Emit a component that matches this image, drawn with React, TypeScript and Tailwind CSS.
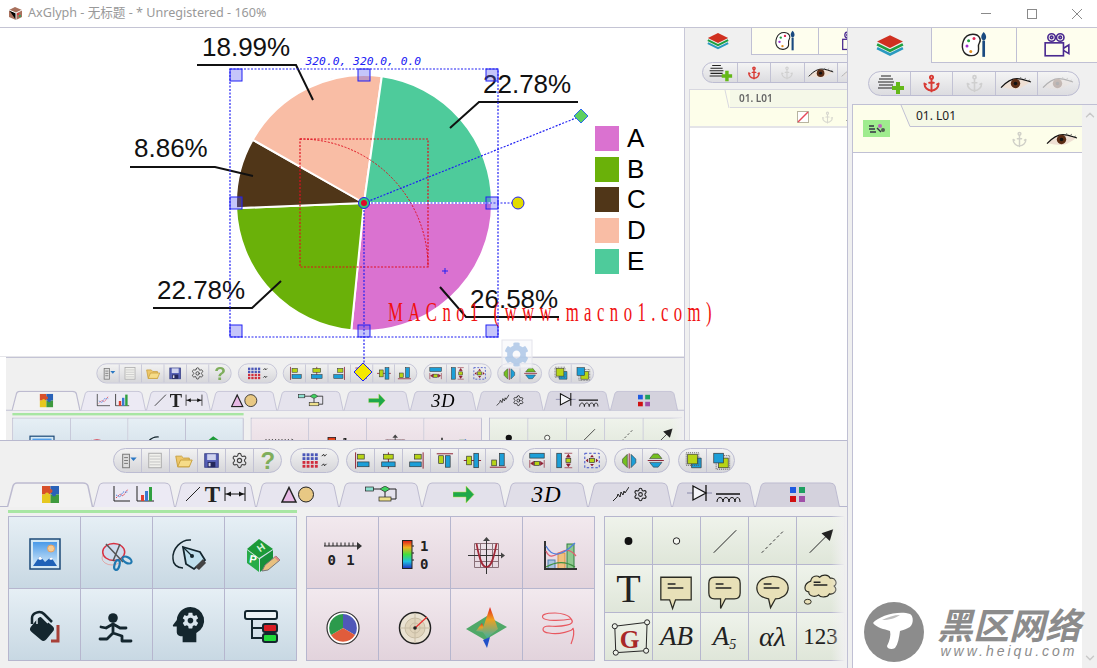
import { Anchor, ChevronDown, ChevronUp, Settings } from "lucide-react";
import { FaCog } from "react-icons/fa";
import { MdPsychology } from "react-icons/md";
import type { ReactNode } from "react";

const RED = "#8c1c2e";
const YEL = "#b7d416";
const BLU = "#1c9fd8";
const INK = "#14262e";
const SANS = "Liberation Sans, sans-serif";
const SERIF = "Liberation Serif, serif";

function polar(r: number, deg: number, cx = 364, cy = 203) {
  const a = (deg * Math.PI) / 180;
  return `${cx + r * Math.cos(a)} ${cy + r * Math.sin(a)}`;
}

function slice(from: number, to: number) {
  return `M364 203 L${polar(128, from)} A128 128 0 0 1 ${polar(128, to)} Z`;
}

const slices = [
  { from: 0, to: 95.7, color: "#da72d0" },
  { from: 95.7, to: 177.7, color: "#6ab109" },
  { from: 177.7, to: 209.6, color: "#503618" },
  { from: 209.6, to: 278, color: "#f9bda5" },
  { from: 278, to: 360, color: "#4ecb9b" },
];

const legend = [
  { name: "A", color: "#da72d0", y: 126 },
  { name: "B", color: "#6ab109", y: 157 },
  { name: "C", color: "#503618", y: 187 },
  { name: "D", color: "#f9bda5", y: 218 },
  { name: "E", color: "#4ecb9b", y: 249 },
];

const labels = [
  { text: "18.99%", x: 202, y: 56, line: "197,65 296,65 313,100" },
  { text: "22.78%", x: 483, y: 93, line: "578,102 479,102 450,128" },
  { text: "8.86%", x: 134, y: 157, line: "130,167 215,167 253,176" },
  { text: "22.78%", x: 157, y: 299, line: "153,308 252,308 281,281" },
  { text: "26.58%", x: 470, y: 308, line: "440,287 466,317 559,317" },
];

const handles = [
  [236, 75], [364, 75], [492, 75], [236, 203], [492, 203], [236, 331], [364, 331], [492, 331],
];

function Chart() {
  return (
    <svg width="730" height="413" viewBox="0 28 730 413" className="absolute left-0 top-0">
      {slices.map((s) => (
        <path key={s.from} d={slice(s.from, s.to)} fill={s.color} stroke="#fff" strokeWidth="2" />
      ))}
      {legend.map((l) => (
        <g key={l.name}>
          <rect x="595" y={l.y} width="24" height="25" fill={l.color} />
          <text x="627" y={l.y + 21} fontSize="26" fontFamily={SANS} fill="#000">{l.name}</text>
        </g>
      ))}
      {labels.map((l) => (
        <g key={l.text + l.x}>
          <polyline points={l.line} fill="none" stroke="#111" strokeWidth="2" />
          <text x={l.x} y={l.y} fontSize="26" fontFamily={SANS} fill="#111">{l.text}</text>
        </g>
      ))}
      <rect x="300" y="139" width="128" height="128" fill="none" stroke="#e01020" strokeWidth="1.2" strokeDasharray="2 1.5" />
      <path d="M300 139 A128 128 0 0 1 428 267" fill="none" stroke="#e01020" strokeDasharray="2 1.5" />
      <rect x="230" y="69" width="268" height="268" fill="none" stroke="#2020f4" strokeWidth="1.2" strokeDasharray="2 1.5" />
      <path d="M364 203H518M364 203V372M364 203L581 116" stroke="#2020f4" strokeWidth="1.2" strokeDasharray="2 1.5" fill="none" />
      {handles.map(([x, y]) => (
        <rect key={`${x}-${y}`} x={x - 6} y={y - 6} width="12" height="12" fill="#5a5af0" fillOpacity="0.35" stroke="#2020f4" />
      ))}
      <circle cx="518" cy="203" r="6" fill="#e2dc00" stroke="#2020f4" />
      <path d="M581 109L588 116L581 123L574 116Z" fill="#5fd060" stroke="#2a6af0" />
      <circle cx="364" cy="203" r="5.5" fill="#30c878" stroke="#2020f4" />
      <circle cx="364" cy="203" r="3" fill="#e00828" />
      <text x="305.5" y="65" fontSize="11.3" fontStyle="italic" fontFamily="DejaVu Sans Mono, monospace" fill="#2020f4">320.0, 320.0, 0.0</text>
      <path d="M445 268V274M442 271H448" stroke="#2020f4" />
      <rect x="502" y="340" width="30" height="28" fill="#f6f6fa" fillOpacity="0.55" stroke="#e4e4ec" />
      <FaCog x="504" y="342" size={25} color="#a9c4e6" opacity="0.8" />
      <path d="M363 363L372 372L363 381L354 372Z" fill="#f4e800" stroke="#2020f4" />
      <text transform="translate(388 321) scale(0.62 1)" fontSize="27" fontFamily={SERIF} textLength="522" lengthAdjust="spacing" fill="#f01010">MACno1 (www.macno1.com)</text>
    </svg>
  );
}

type Bars = { l?: number[][]; b?: (number | string)[][] };

// lines and coloured boxes, in a 28x25 toolbar cell
function AlignIcon({ l = [], b = [] }: Bars) {
  return (
    <svg width="28" height="25" viewBox="0 0 28 25">
      {l.map((p, i) => (
        <line key={i} x1={p[0]} y1={p[1]} x2={p[2]} y2={p[3]} stroke={RED} strokeWidth="1" />
      ))}
      {b.map((r, i) => (
        <rect key={i} x={r[0]} y={r[1]} width={r[2]} height={r[3]} fill={String(r[4])} stroke="#333" strokeWidth="0.7" />
      ))}
    </svg>
  );
}

function MenuIcon() {
  return (
    <svg width="28" height="25" viewBox="0 0 28 25">
      <rect x="9" y="6" width="7" height="14" fill="#ddd" stroke="#777" />
      <path d="M10.5 9.5H14.5M10.5 12.5H14.5M10.5 15.5H14.5" stroke="#777" />
      <path d="M17 9.5H23.5L20.2 13Z" fill="#2b78c4" />
    </svg>
  );
}

function PageIcon() {
  return (
    <svg width="28" height="25" viewBox="0 0 28 25">
      <rect x="7" y="5" width="13" height="15" fill="#f0f0ec" stroke="#aaa" />
      <path d="M8 8H19M8 11H19M8 14H19M8 17H19" stroke="#c4c4c4" />
    </svg>
  );
}

function FolderIcon() {
  return (
    <svg width="28" height="25" viewBox="0 0 28 25">
      <path d="M6 8L12 8L14 10H20V19H8Z" fill="#eec76a" stroke="#c8a040" />
      <path d="M8 19L11 12H23L20 19Z" fill="#f6dc88" stroke="#c8a040" />
    </svg>
  );
}

function FloppyIcon() {
  return (
    <svg width="28" height="25" viewBox="0 0 28 25">
      <rect x="7" y="5.5" width="14" height="14" fill="#5660b6" stroke="#3c4488" />
      <rect x="9.5" y="6" width="9" height="6" fill="#cfd3ee" />
      <rect x="10" y="14" width="8" height="5.5" fill="#24285c" />
      <rect x="11" y="15" width="2" height="3.5" fill="#d8d8e8" />
    </svg>
  );
}

function GridDotsIcon() {
  const cells = [0, 1, 2, 3];
  return (
    <svg width="49" height="25" viewBox="0 0 49 25">
      {cells.map((r) =>
        cells.map((c) => (
          <rect key={`${r}${c}`} x={12 + c * 4.3} y={5 + r * 4} width="3" height="3" fill={r < 2 ? "#4a56b8" : "#d02c3c"} />
        ))
      )}
      <path d="M32 8L34 6L35 8L37 6M32 18L34 16L35 18L37 16" stroke="#222" fill="none" />
    </svg>
  );
}

function SpreadTop() {
  return (
    <svg width="28" height="25" viewBox="0 0 28 25">
      <rect x="7" y="5" width="15" height="5" fill={BLU} stroke="#333" strokeWidth="0.7" />
      <path d="M7 12V20M22 12V20M8 15.5L11 13.5V17.5ZM21 15.5L18 13.5V17.5Z" stroke={RED} fill={RED} strokeWidth="0.7" />
      <rect x="12" y="13.5" width="5" height="4" fill={YEL} stroke="#333" strokeWidth="0.7" />
    </svg>
  );
}

function SpreadSide() {
  return (
    <svg width="28" height="25" viewBox="0 0 28 25">
      <rect x="6" y="5" width="5" height="15" fill={BLU} stroke="#333" strokeWidth="0.7" />
      <path d="M14 5H22M14 20H22M18 6L16 9H20ZM18 19L16 16H20Z" stroke={RED} fill={RED} strokeWidth="0.7" />
      <rect x="15.5" y="10.5" width="5" height="4" fill={YEL} stroke="#333" strokeWidth="0.7" />
    </svg>
  );
}

function SpreadCenter() {
  return (
    <svg width="28" height="25" viewBox="0 0 28 25">
      <rect x="6" y="5" width="15" height="15" fill="none" stroke="#3a4ac8" strokeDasharray="2.5 2" />
      <rect x="11" y="10.5" width="5" height="4" fill={YEL} stroke="#333" strokeWidth="0.7" />
      <path d="M13.5 6.5L11.5 9H15.5ZM13.5 18.5L11.5 16H15.5ZM7 12.5L9.5 10.5V14.5ZM20 12.5L17.5 10.5V14.5Z" fill={RED} />
    </svg>
  );
}

function FlipH() {
  return (
    <svg width="28" height="25" viewBox="0 0 28 25">
      <path d="M15 5V21" stroke={RED} />
      <path d="M13 6V20L8 15V11Z" fill="#74c020" stroke="#333" strokeWidth="0.6" />
      <path d="M17 6V20L22 15V11Z" fill={BLU} stroke="#333" strokeWidth="0.6" />
    </svg>
  );
}

function FlipV() {
  return (
    <svg width="28" height="25" viewBox="0 0 28 25">
      <path d="M5 12.5H22" stroke={RED} />
      <path d="M7 10.5H20L16 5.5H11Z" fill="#74c020" stroke="#333" strokeWidth="0.6" />
      <path d="M7 14.5H20L16 19.5H11Z" fill={BLU} stroke="#333" strokeWidth="0.6" />
    </svg>
  );
}

function OrderFront() {
  return (
    <svg width="28" height="25" viewBox="0 0 28 25">
      <path d="M15 10H23V20H13V15" fill={BLU} stroke="#333" strokeWidth="0.7" />
      <rect x="9" y="6" width="10" height="10" fill={YEL} stroke="#333" strokeWidth="0.7" />
      <rect x="7.5" y="4.5" width="13" height="13" fill="none" stroke="#555" strokeDasharray="1 1" />
    </svg>
  );
}

function OrderBack() {
  return (
    <svg width="28" height="25" viewBox="0 0 28 25">
      <rect x="12" y="10" width="10" height="10" fill={YEL} stroke="#333" strokeWidth="0.7" />
      <rect x="9.5" y="7.5" width="14" height="14" fill="none" stroke="#555" strokeDasharray="1 1" />
      <rect x="7" y="5" width="10" height="10" fill={BLU} stroke="#333" strokeWidth="0.7" />
    </svg>
  );
}

function Pill({ width, children }: { width: string; children: ReactNode }) {
  return (
    <div className={`flex h-[25px] shrink-0 overflow-hidden rounded-full border border-[#bcbcd2] bg-linear-to-b from-[#f2f2f2] to-[#d6d6da] ${width}`}>
      {children}
    </div>
  );
}

function Cell({ children, first }: { children: ReactNode; first?: boolean }) {
  return (
    <div className={`flex min-w-0 flex-1 items-center justify-center ${first ? "" : "border-l border-[#c2c2d4]"}`}>
      {children}
    </div>
  );
}

function Toolbar() {
  return (
    <div className="flex justify-center gap-[7.5px]">
      <Pill width="w-[169px]">
        <Cell first><MenuIcon /></Cell>
        <Cell><PageIcon /></Cell>
        <Cell><FolderIcon /></Cell>
        <Cell><FloppyIcon /></Cell>
        <Cell><Settings size={17} color="#444" strokeWidth={1.6} /></Cell>
        <Cell><span className="font-['Liberation_Sans',sans-serif] text-[24px] leading-none font-bold text-[#7fae5c]">?</span></Cell>
      </Pill>
      <Pill width="w-[49px]">
        <Cell first><GridDotsIcon /></Cell>
      </Pill>
      <Pill width="w-[168px]">
        <Cell first><AlignIcon l={[[9, 4, 9, 21]]} b={[[11, 6, 7, 5, YEL], [11, 14, 12, 5, BLU]]} /></Cell>
        <Cell><AlignIcon l={[[14, 4, 14, 21]]} b={[[9, 6, 10, 5, YEL], [7, 14, 14, 5, BLU]]} /></Cell>
        <Cell><AlignIcon l={[[21, 4, 21, 21]]} b={[[12, 6, 7, 5, YEL], [7, 14, 12, 5, BLU]]} /></Cell>
        <Cell><AlignIcon l={[[6, 5.5, 23, 5.5]]} b={[[8, 7.5, 5, 8, YEL], [15, 7.5, 5, 12, BLU]]} /></Cell>
        <Cell><AlignIcon l={[[5, 12.5, 23, 12.5]]} b={[[8, 8, 5, 9, YEL], [15.5, 5, 5, 15, BLU]]} /></Cell>
        <Cell><AlignIcon l={[[4, 19.5, 21, 19.5]]} b={[[6, 12, 5, 6, YEL], [14, 5, 5, 13, BLU]]} /></Cell>
      </Pill>
      <Pill width="w-[85px]">
        <Cell first><SpreadTop /></Cell>
        <Cell><SpreadSide /></Cell>
        <Cell><SpreadCenter /></Cell>
      </Pill>
      <Pill width="w-[56px]">
        <Cell first><FlipH /></Cell>
        <Cell><FlipV /></Cell>
      </Pill>
      <Pill width="w-[57px]">
        <Cell first><OrderFront /></Cell>
        <Cell><OrderBack /></Cell>
      </Pill>
    </div>
  );
}

function TabShape({ width, fill, active }: { width: number; fill: string; active?: boolean }) {
  const d = `M0.5 25L6 4Q7 1 10 1H${width - 10}Q${width - 6} 1 ${width - 5} 4L${width - 0.5} 25`;
  return (
    <svg width={width} height="25" viewBox={`0 0 ${width} 25`} className="absolute left-0 top-0">
      <path d={d} fill={fill} stroke="#bdbbd0" strokeWidth={active ? 1.5 : 1} />
    </svg>
  );
}

function PuzzleIcon() {
  return (
    <svg width="17" height="17" viewBox="0 0 17 17">
      <rect width="8.5" height="8.5" fill="#d8502a" />
      <rect x="8.5" width="8.5" height="8.5" fill="#2a62b8" />
      <rect y="8.5" width="8.5" height="8.5" fill="#e6c820" />
      <rect x="8.5" y="8.5" width="8.5" height="8.5" fill="#3e9a3e" />
      <circle cx="8.5" cy="5" r="2" fill="#d8502a" />
      <circle cx="5" cy="8.5" r="2" fill="#e6c820" />
      <circle cx="12" cy="8.5" r="2" fill="#2a62b8" />
    </svg>
  );
}

function ChartsIcon() {
  return (
    <svg width="42" height="16" viewBox="0 0 42 16">
      <path d="M1 0V15H17M24 0V15H41" stroke="#222" fill="none" />
      <path d="M3 12L7 8L10 10L15 3" stroke="#e04050" strokeDasharray="1.5 1" fill="none" />
      <path d="M3 9L7 11L10 6L15 6" stroke="#4a80e0" strokeDasharray="1.5 1" fill="none" />
      <rect x="28" y="9" width="3" height="6" fill="#e04030" />
      <rect x="32" y="5" width="3" height="10" fill="#3a78d0" />
      <rect x="36" y="1" width="3" height="14" fill="#30a040" />
    </svg>
  );
}

function LineTextIcon() {
  return (
    <div className="flex items-center gap-[4px]">
      <svg width="16" height="16" viewBox="0 0 16 16"><path d="M1 15L15 1" stroke="#222" /></svg>
      <span className="font-['Liberation_Serif',serif] text-[23px] leading-none font-bold text-[#222]">T</span>
      <svg width="22" height="16" viewBox="0 0 22 16"><path d="M1 1V15M21 1V15M1 8H21" stroke="#111" /><path d="M2 8L7 5.5V10.5ZM20 8L15 5.5V10.5Z" fill="#111" /></svg>
    </div>
  );
}

function ShapesIcon() {
  return (
    <svg width="34" height="17" viewBox="0 0 34 17">
      <path d="M8 1.5L15 16H1Z" fill="#e6b8e4" stroke="#222" strokeWidth="1.5" />
      <circle cx="25" cy="8.5" r="7.5" fill="#e8c884" stroke="#222" />
    </svg>
  );
}

function FlowIcon() {
  return (
    <svg width="32" height="16" viewBox="0 0 32 16">
      <rect x="0.5" y="1" width="8" height="4" fill="#8ce0d0" stroke="#222" strokeWidth="0.7" />
      <path d="M20 0L25 3L20 6L15 3Z" fill="#40d060" stroke="#222" strokeWidth="0.7" />
      <rect x="14" y="11" width="12" height="4" fill="#eee08c" stroke="#222" strokeWidth="0.7" />
      <path d="M8 3H15M25 3H31V13H26M20 6V11" stroke="#222" fill="none" />
    </svg>
  );
}

function ArrowTabIcon() {
  return (
    <svg width="22" height="17" viewBox="0 0 22 17">
      <path d="M0 6H13V0L21 8.5L13 17V11H0Z" fill="#1ea84a" stroke="#c0e040" strokeWidth="0.5" />
    </svg>
  );
}

function ElectroIcon() {
  return (
    <div className="flex items-center gap-[4px]">
      <svg width="16" height="16" viewBox="0 0 16 16">
        <path d="M0 15L4 11L5 8L7 11L8 6L10 9L11 5L12 7L16 1" stroke="#222" fill="none" />
      </svg>
      <Settings size={15} color="#222" strokeWidth={1.7} />
    </div>
  );
}

function DiodeIcon() {
  return (
    <svg width="54" height="18" viewBox="0 0 54 18">
      <path d="M0 8H6M20 8H25" stroke="#88a" />
      <path d="M6 1L19 8L6 15Z" fill="#f4f4f8" stroke="#111" strokeWidth="1.3" />
      <path d="M19 0V16" stroke="#111" strokeWidth="1.3" />
      <path d="M29 9H53" stroke="#111" strokeWidth="1.5" />
      <path d="M30 17C30 11 36 11 36 17C36 11 42 11 42 17C42 11 48 11 48 17C48 11 53 11 53 17" stroke="#111" fill="none" />
    </svg>
  );
}

function SquaresIcon() {
  return (
    <svg width="15" height="15" viewBox="0 0 15 15">
      <rect width="6" height="6" fill="#1e5ae0" />
      <rect x="9" width="6" height="6" fill="#1ea060" />
      <rect y="9" width="6" height="6" fill="#d01010" />
      <rect x="9" y="9" width="6" height="6" fill="#a050a8" />
    </svg>
  );
}

const tabs = [
  { width: 86, fill: "#f2f2f2", icon: <PuzzleIcon /> },
  { width: 82, fill: "#eceaf4", icon: <ChartsIcon /> },
  { width: 81, fill: "#e9e7f1", icon: <LineTextIcon /> },
  { width: 83, fill: "#e7e5ef", icon: <ShapesIcon /> },
  { width: 83, fill: "#e5e3ed", icon: <FlowIcon /> },
  { width: 83, fill: "#e3e1eb", icon: <ArrowTabIcon /> },
  { width: 83, fill: "#e0dee8", icon: <span className="font-['Liberation_Serif',serif] text-[23px] leading-none tracking-[1px] text-black italic">3D</span> },
  { width: 84, fill: "#dddbe5", icon: <ElectroIcon /> },
  { width: 83, fill: "#d9d7e2", icon: <DiodeIcon /> },
  { width: 85, fill: "#d4d2dd", icon: <SquaresIcon /> },
];

function TabRow() {
  return (
    <div className="relative mt-[9px] flex h-[25px] border-b border-[#b6b6ce] pl-[7px]">
      {tabs.map((t, i) => (
        <div key={i} className={`relative flex items-center justify-center ${i === 0 ? "z-10 h-[25px]" : "h-[24px]"}`} style={{ width: t.width }}>
          <TabShape width={t.width} fill={t.fill} active={i === 0} />
          <div className="relative flex items-center justify-center">{t.icon}</div>
        </div>
      ))}
    </div>
  );
}

function Box48({ children }: { children: ReactNode }) {
  return <svg width="48" height="48" viewBox="0 0 48 48">{children}</svg>;
}

function ImageIcon() {
  return (
    <Box48>
      <rect x="9" y="10" width="30" height="30" fill="#d4e8f4" stroke="#1d4a78" strokeWidth="1.5" />
      <defs>
        <linearGradient id="sky" x1="0" y1="0" x2="0" y2="1"><stop offset="0" stopColor="#4a9ae8" /><stop offset="1" stopColor="#d8ecfa" /></linearGradient>
      </defs>
      <rect x="12" y="13" width="24" height="24" fill="url(#sky)" />
      <circle cx="30" cy="19.5" r="3.5" fill="#f8cc90" stroke="#e8a060" />
      <path d="M12 37L19 27L24 33L30 28L36 37Z" fill="#1f62b8" />
      <path d="M19 27L21.5 30L19 31L17 30ZM30 28L32 30L30 31L28 30Z" fill="#fff" />
    </Box48>
  );
}

function ScissorsIcon() {
  return (
    <Box48>
      <ellipse cx="19" cy="29" rx="10" ry="7" fill="none" stroke="#e0a8a8" />
      <ellipse cx="20.7" cy="23" rx="11" ry="8.5" fill="#cfdcee" stroke="#d83040" strokeWidth="1.5" />
      <path d="M13 15L30 33M27 15L20 32" stroke="#555" strokeWidth="1.5" />
      <ellipse cx="24" cy="36" rx="2.5" ry="5" fill="none" stroke="#1f78b0" strokeWidth="2.2" transform="rotate(15 24 36)" />
      <ellipse cx="34" cy="31" rx="5" ry="2.8" fill="none" stroke="#1f78b0" strokeWidth="2.2" transform="rotate(30 34 31)" />
    </Box48>
  );
}

function NibIcon() {
  return (
    <Box48>
      <path d="M26 11C16 10 7 20 8 30C8 35 12 39 18 39" fill="none" stroke={INK} strokeWidth="1.5" />
      <path d="M18 18L35 23L40 31L29 40L21 35Z" fill="#bfe0ee" stroke={INK} strokeWidth="1.8" />
      <path d="M34 41L41 34L38 30L30 38Z" fill="#444" />
      <path d="M18 18L27 27" stroke={INK} strokeWidth="1.2" />
      <circle cx="27" cy="27" r="2" fill={INK} />
    </Box48>
  );
}

function CubeIcon() {
  return (
    <Box48>
      <path d="M22 10L36 20L22 29L10 20Z" fill="#1c9a38" />
      <path d="M10 21L22 30V43L10 34Z" fill="#28ac48" />
      <path d="M23 30L36 21V33L23 43Z" fill="#18903a" />
      <text x="21" y="23" fontSize="10" fontWeight="bold" fontFamily={SANS} fill="#d8f4d8" transform="rotate(-35 23 20)">H</text>
      <text x="12" y="34" fontSize="11" fontWeight="bold" fontFamily={SANS} fill="#fff" transform="rotate(10 16 32)">P</text>
      <path d="M25 42L28 36L39 27L43 31L31 41Z" fill="#e8c080" stroke="#777" />
      <path d="M37 28L41 32L43 31L39 27Z" fill="#e08888" />
    </Box48>
  );
}

function BucketIcon() {
  return (
    <Box48>
      <path d="M37 24V40H30" fill="none" stroke="#a84038" strokeWidth="3" />
      <rect x="11" y="19" width="20" height="18" rx="4" fill={INK} transform="rotate(40 21 28)" />
      <path d="M11 23V17C11 12 19 9 23 13L31 21" fill="none" stroke={INK} strokeWidth="2.5" />
      <path d="M16 23V17C17 15 20 14 21 16L27 22" fill="none" stroke="#dce8ee" strokeWidth="1.5" />
    </Box48>
  );
}

function RunnerIcon() {
  return (
    <Box48>
      <circle cx="20" cy="17" r="4.8" fill={INK} />
      <path d="M20 23V31M8 26L13 27L20 23L27 27L33 27M7 38L14 38L20 32L29 35L29 40L38 40" fill="none" stroke={INK} strokeWidth="2.8" strokeLinejoin="round" strokeLinecap="round" />
    </Box48>
  );
}

function TreeIcon() {
  return (
    <Box48>
      <rect x="8" y="10" width="32" height="8" rx="2" fill="#eef4f6" stroke={INK} strokeWidth="2" />
      <path d="M15 18V37H26M15 27H26" stroke={INK} strokeWidth="2" fill="none" />
      <rect x="26" y="23" width="14" height="8" rx="2" fill="#d81c24" stroke={INK} strokeWidth="2" />
      <rect x="26" y="33" width="14" height="8" rx="2" fill="#20d838" stroke={INK} strokeWidth="2" />
    </Box48>
  );
}

const blueCells: ReactNode[] = [
  <ImageIcon />,
  <ScissorsIcon />,
  <NibIcon />,
  <CubeIcon />,
  <BucketIcon />,
  <RunnerIcon />,
  <MdPsychology size={47} color={INK} />,
  <TreeIcon />,
];

function RulerIcon() {
  const ticks = [6, 10, 14, 18, 22, 26, 30, 34];
  return (
    <Box48>
      <path d="M5 17H38" stroke="#222" />
      {ticks.map((x) => <path key={x} d={`M${x} 13.5V17`} stroke="#222" />)}
      <path d="M38 13L43 17L38 21Z" fill="#333" />
      <text x="8.5" y="36" fontSize="14" fontWeight="bold" fontFamily="DejaVu Sans Mono, monospace" fill="#222" letterSpacing="1">0 1</text>
    </Box48>
  );
}

function ColorBarIcon() {
  return (
    <Box48>
      <defs>
        <linearGradient id="rainbow" x1="0" y1="0" x2="0" y2="1">
          <stop offset="0" stopColor="#e01818" />
          <stop offset="0.25" stopColor="#f0b020" />
          <stop offset="0.5" stopColor="#40e040" />
          <stop offset="0.75" stopColor="#20c0e0" />
          <stop offset="1" stopColor="#2030c0" />
        </linearGradient>
      </defs>
      <rect x="11.5" y="11.5" width="9.5" height="28" fill="url(#rainbow)" stroke="#222" />
      <path d="M21 17H23M21 24H23M21 31H23" stroke="#222" />
      <text x="29" y="22" fontSize="14" fontWeight="bold" fontFamily="DejaVu Sans Mono, monospace" fill="#222">1</text>
      <text x="29" y="40" fontSize="14" fontWeight="bold" fontFamily="DejaVu Sans Mono, monospace" fill="#222">0</text>
    </Box48>
  );
}

function ParabolaIcon() {
  const lines = [11.5, 17.5, 23.5, 29.5, 35.5];
  return (
    <Box48>
      {lines.map((p) => <path key={p} d={`M${p} 14.5V38.5`} stroke="#8a7078" />)}
      {[14.5, 20.5, 26.5, 32.5, 38.5].map((p) => <path key={p} d={`M11.5 ${p}H35.5`} stroke="#8a7078" />)}
      <path d="M5 26.5H38M23.5 11V45" stroke="#333" />
      <path d="M38 23.5L42 26.5L38 29.5ZM20 12L23.5 8L27 12Z" fill="#444" />
      <path d="M13.5 14.5C17 34 20 38 23.5 38C27 38 30 34 33.5 14.5" stroke="#a02838" strokeWidth="1.7" fill="none" />
    </Box48>
  );
}

function AreaChartIcon() {
  return (
    <Box48>
      <rect x="13" y="31" width="7" height="9" fill="#a8c4e0" stroke="#5080b0" />
      <rect x="23" y="24" width="7" height="16" fill="#f0c080" stroke="#d89040" />
      <rect x="32" y="15" width="7" height="25" fill="#90c890" stroke="#308040" />
      <path d="M10 40V12M9 40H42" stroke="#333" strokeWidth="2" fill="none" />
      <path d="M11 22C18 38 28 10 41 27" stroke="#e06070" strokeWidth="1.3" fill="none" />
      <path d="M11 17C18 30 28 26 40 14" stroke="#5080e0" strokeWidth="1.3" fill="none" />
      <path d="M11 38C18 34 28 30 40 38" stroke="#409040" strokeWidth="1.3" fill="none" />
    </Box48>
  );
}

function PieIcon() {
  return (
    <Box48>
      <circle cx="24" cy="27" r="16" fill="#fff" stroke="#333" strokeWidth="1.2" />
      <path d="M24 27L24 13A14 14 0 0 1 36 34Z" fill="#5058b8" />
      <path d="M24 27L36 34A14 14 0 0 1 12 34Z" fill="#e05c3c" />
      <path d="M24 27L12 34A14 14 0 0 1 24 13Z" fill="#2c9a4c" />
    </Box48>
  );
}

function RadarIcon() {
  return (
    <Box48>
      <circle cx="24" cy="27" r="15.5" fill="#eae2d2" stroke="#222" strokeWidth="1.5" />
      <circle cx="24" cy="27" r="10" fill="#e0d4bc" stroke="#c8bca4" />
      <circle cx="24" cy="27" r="5" fill="none" stroke="#c8bca4" />
      <path d="M9 27H39M24 12V42" stroke="#c8bca4" />
      <path d="M24 27L36 16" stroke="#e83030" strokeWidth="1.2" />
      <circle cx="24" cy="27" r="1.8" fill="#222" />
    </Box48>
  );
}

function SurfaceIcon() {
  return (
    <Box48>
      <defs>
        <linearGradient id="peak" x1="0" y1="0" x2="0" y2="1">
          <stop offset="0" stopColor="#e02020" />
          <stop offset="0.4" stopColor="#f0a020" />
          <stop offset="1" stopColor="#40b0a0" />
        </linearGradient>
      </defs>
      <path d="M3 28L24 15L44 26L22 39Z" fill="#50a868" />
      <path d="M20 39L24 47L27 36Z" fill="#2050c8" />
      <path d="M13 30L19 22L23 32Z" fill="url(#peak)" />
      <path d="M19 30L27 6L35 28L24 37Z" fill="url(#peak)" />
    </Box48>
  );
}

function HelixIcon() {
  return (
    <Box48>
      <path d="M20 12C10 12 6 14 8 17C10 20 26 20 36 18C34 14 26 12 20 12" stroke="#e85860" strokeWidth="1.2" fill="none" />
      <path d="M36 18C42 24 26 26 14 25C6 25 6 31 14 32C24 34 38 30 38 27C40 32 38 38 36 43" stroke="#e85860" strokeWidth="1.2" fill="none" />
    </Box48>
  );
}

const pinkCells: ReactNode[] = [
  <RulerIcon />,
  <ColorBarIcon />,
  <ParabolaIcon />,
  <AreaChartIcon />,
  <PieIcon />,
  <RadarIcon />,
  <SurfaceIcon />,
  <HelixIcon />,
];

function Callout({ shape }: { shape: "rect" | "round" | "oval" | "cloud" }) {
  return (
    <Box48>
      {shape === "rect" && <path d="M8 12H39V35H23L20 44L17 35H8Z" fill="#e8e0b8" stroke="#2a2a22" strokeWidth="1.3" />}
      {shape === "round" && <path d="M14 12H34Q40 12 40 18V28Q40 34 34 34H25L20 44L20 34H14Q8 34 8 28V18Q8 12 14 12Z" fill="#e8e0b8" stroke="#2a2a22" strokeWidth="1.3" />}
      {shape === "oval" && <path d="M24 11C33 11 40 16 40 23C40 30 33 34 27 34L22 43L20 34C13 33 8 29 8 23C8 16 15 11 24 11Z" fill="#e8e0b8" stroke="#2a2a22" strokeWidth="1.3" />}
      {shape === "cloud" && (
        <>
          <path d="M14 16C15 10 21 10 23 12C26 9 32 9 34 13C39 12 42 18 38 21C42 25 38 30 33 29C31 33 24 33 22 30C18 33 12 31 12 27C7 27 6 19 14 16Z" fill="#e8e0b8" stroke="#2a2a22" strokeWidth="1.2" />
          <ellipse cx="11" cy="37" rx="3.5" ry="2.5" fill="#e8e0b8" stroke="#2a2a22" />
        </>
      )}
      <path d={shape === "cloud" ? "M17 17H24M17 20H31" : "M15 19H23M15 23H31"} stroke="#222" strokeWidth="1.5" />
    </Box48>
  );
}

function SerifCell({ text, size }: { text: ReactNode; size: string }) {
  return <span className={`font-['Liberation_Serif',serif] leading-none text-[#222] ${size}`}>{text}</span>;
}

function GBoxIcon() {
  return (
    <Box48>
      <path d="M10 13L43 9L42 38L11 40Z" fill="none" stroke="#222" />
      <text x="15" y="35" fontSize="26" fontWeight="bold" fontFamily={SERIF} fill="#a82828">G</text>
      {[[10, 13], [43, 9], [42, 38], [11, 40]].map(([x, y]) => (
        <circle key={x} cx={x} cy={y} r="2.6" fill="#eef2ea" stroke="#222" />
      ))}
    </Box48>
  );
}

const greenCells: ReactNode[] = [
  <Box48><circle cx="24" cy="24" r="4" fill="#111" /></Box48>,
  <Box48><circle cx="24" cy="24" r="3.3" fill="#f6f8f2" stroke="#222" /></Box48>,
  <Box48><path d="M13 36L36 13" stroke="#222" /></Box48>,
  <Box48><path d="M13 36L36 13" stroke="#333" strokeDasharray="3 2.5" /></Box48>,
  <Box48><path d="M13 36L34 15" stroke="#222" /><path d="M37 12L33.5 24L25 16Z" fill="#222" /></Box48>,
  <SerifCell text="T" size="text-[40px]" />,
  <Callout shape="rect" />,
  <Callout shape="round" />,
  <Callout shape="oval" />,
  <Callout shape="cloud" />,
  <GBoxIcon />,
  <SerifCell text={<i>AB</i>} size="text-[27px]" />,
  <SerifCell text={<i>A<sub className="text-[14px]">5</sub></i>} size="text-[27px]" />,
  <SerifCell text={<i>αλ</i>} size="text-[28px]" />,
  <SerifCell text="123" size="text-[23px]" />,
];

function ToolGrid({ cells, cols, size, tone }: { cells: ReactNode[]; cols: string; size: string; tone: string }) {
  return (
    <div className={`grid shrink-0 border-t border-l border-[#b6b6ce] ${cols}`}>
      {cells.map((c, i) => (
        <div key={i} className={`flex items-center justify-center overflow-hidden border-r border-b border-[#b6b6ce] bg-linear-to-b ${size} ${tone}`}>
          {c}
        </div>
      ))}
    </div>
  );
}

function Palette() {
  return (
    <div className="flex h-[145px] gap-[9px] pl-[8px]">
      <ToolGrid cells={blueCells} cols="grid-cols-4" size="h-[72px] w-[72px]" tone="from-[#e6eff5] to-[#c8d8e3]" />
      <ToolGrid cells={pinkCells} cols="grid-cols-4" size="h-[72px] w-[72px]" tone="from-[#f2e9ee] to-[#e2d3dc]" />
      <div className="relative">
        <ToolGrid cells={greenCells} cols="grid-cols-5" size="h-[48px] w-[48px]" tone="from-[#eff3eb] to-[#dfe6d9]" />
        <div className="absolute top-0 right-0 bottom-0 w-[14px] bg-linear-to-r from-transparent to-[#f0f0f0]" />
      </div>
    </div>
  );
}

function ToolPanel() {
  return (
    <div className="h-[228px] w-[848px] border-t border-[#b9b9cf] bg-[#f0f0f0] pt-[7px]">
      <Toolbar />
      <TabRow />
      <div className="mx-[8px] mt-[3px] h-[3px] w-[289px] bg-[#a8e6a3]" />
      <div className="mt-[3px]">
        <Palette />
      </div>
    </div>
  );
}

function LayersIcon({ size }: { size: number }) {
  return (
    <svg width={size} height={size * 0.85} viewBox="0 0 26 22">
      <path d="M1 13L13 19L25 13" fill="none" stroke="#2a9ac0" strokeWidth="2.4" />
      <path d="M1 9.5L13 15.5L25 9.5" fill="none" stroke="#1fa040" strokeWidth="2.4" />
      <path d="M13 1L25 7L13 13L1 7Z" fill="#d03020" />
    </svg>
  );
}

function PaletteIcon({ size }: { size: number }) {
  return (
    <svg width={size} height={size} viewBox="0 0 26 26">
      <path d="M12 3C18 3 20 8 18 11C16 14 18 15 17 19C15 24 7 24 4 20C0 14 3 3 12 3Z" fill="#fff" stroke="#222" strokeWidth="1.3" />
      <circle cx="13" cy="7" r="1.4" fill="#e02850" />
      <circle cx="8" cy="9" r="1.4" fill="#20a040" />
      <circle cx="6.5" cy="14" r="1.4" fill="#a030d0" />
      <circle cx="10" cy="19" r="1.4" fill="#e09020" />
      <path d="M22 9V24" stroke="#1a4a80" strokeWidth="2.5" />
      <path d="M22 1C25 4 25 8 22 9C19 8 19 4 22 1Z" fill="#1a4a80" />
    </svg>
  );
}

function CameraIcon({ size }: { size: number }) {
  return (
    <svg width={size} height={size} viewBox="0 0 26 26" fill="none" stroke="#4a2a90" strokeWidth="1.5">
      <circle cx="8" cy="6" r="3.5" />
      <circle cx="8" cy="6" r="1.2" />
      <circle cx="16" cy="6" r="3.5" />
      <circle cx="16" cy="6" r="1.2" />
      <rect x="2" y="11" width="17" height="12" />
      <path d="M19 16L24 13V21L19 18" />
    </svg>
  );
}

function EyeIcon({ gray, width }: { gray?: boolean; width: number }) {
  return (
    <svg width={width} height={width * 0.44} viewBox="0 0 32 14" className={gray ? "opacity-25" : ""}>
      <path d="M1 11C7 5 12 3 17 3C22 3 26 5 31 6C27 7 24 12 16 13C10 13 6 12 1 11Z" fill="#efe0d4" />
      <path d="M1 11.5C7 5 12 2.5 17 2.5C22 2.5 26 4.5 31 6" stroke="#111" strokeWidth="1.2" fill="none" />
      <circle cx="15.5" cy="7.5" r="4.7" fill="#5a2c14" />
      <circle cx="15.5" cy="7.5" r="1.8" fill="#111" />
      <path d="M20 2.5L21 1M24 3.5L26 2M27 5L30 4" stroke="#555" strokeWidth="0.7" />
    </svg>
  );
}

function AddLayerIcon({ width }: { width: number }) {
  return (
    <svg width={width} height={width * 0.7} viewBox="0 0 30 21">
      <path d="M6 3H16M4 6H18M3 9H19M4 12H18M3 15H19" stroke="#222" strokeWidth="1.2" fill="none" />
      <path d="M21 9H25V13H29V17H25V21H21V17H17V13H21Z" fill="#64b818" />
    </svg>
  );
}

function SideTabs({ tabH, widths, sizes, clip }: { tabH: string; widths: string[]; sizes: number[]; clip?: boolean }) {
  return (
    <div className={`flex ${tabH} overflow-hidden`}>
      <div className={`flex shrink-0 items-center justify-center border-r border-[#c0c0d4] ${widths[0]}`}>
        <LayersIcon size={sizes[0]} />
      </div>
      <div className={`flex shrink-0 items-center justify-center border-r border-b border-[#c0c0d4] bg-[#fefeee] ${widths[1]}`}>
        <PaletteIcon size={sizes[1]} />
      </div>
      <div className={`flex flex-1 items-center border-b border-[#c0c0d4] bg-[#fefeee] ${clip ? "justify-start pl-[22px]" : "justify-center"}`}>
        <CameraIcon size={sizes[2]} />
      </div>
    </div>
  );
}

function SideButtons({ cell, width, icon }: { cell: string; width: string; icon: number }) {
  const cls = `flex h-full shrink-0 items-center justify-center border-l border-[#c2c2d4] ${cell}`;
  return (
    <div className={`flex h-full shrink-0 overflow-hidden rounded-l-full border border-[#bcbcd2] bg-linear-to-b from-[#f4f4f4] to-[#dcdce0] ${width}`}>
      <div className={`flex h-full shrink-0 items-center justify-center ${cell}`}><AddLayerIcon width={icon + 12} /></div>
      <div className={cls}><Anchor size={icon} color="#d83a34" strokeWidth={2.4} /></div>
      <div className={cls}><Anchor size={icon} color="#d0d0d0" strokeWidth={2} /></div>
      <div className={cls}><EyeIcon width={icon + 12} /></div>
      <div className={cls}><EyeIcon gray width={icon + 12} /></div>
    </div>
  );
}

function BackLayers() {
  return (
    <div className="flex h-[412px] w-[163px] shrink-0 flex-col overflow-hidden border-l border-[#c8c8d8] bg-[#f0f0f0]">
      <SideTabs tabH="h-[27px]" widths={["w-[67px]", "w-[67px]"]} sizes={[22, 22, 22]} clip />
      <div className="mt-[7px] h-[21px] pl-[17px]">
        <SideButtons cell="w-[33.5px]" width="w-[170px]" icon={14} />
      </div>
      <div className="mt-[6px] ml-[4px] flex flex-1 flex-col border-t border-l border-[#d8d8e0] bg-white blur-[0.3px]">
        <div className="flex h-[38px] flex-col border-b-2 border-[#e4e4e8] bg-[#fdfeea]">
          <div className="flex h-[18px]">
            <svg width="40" height="18" viewBox="0 0 40 18" className="shrink-0">
              <path d="M35 0L39 18" stroke="#d8d8e0" />
            </svg>
            <div className="flex flex-1 items-center border-b border-[#d8d8e0] bg-[#f5f8e8] pl-[9px] font-['Noto_Sans',sans-serif] text-[10px] font-semibold text-[#666]">01. L01</div>
          </div>
          <div className="flex flex-1 items-center gap-[12px] pl-[107px]">
            <svg width="12" height="12" viewBox="0 0 12 12" className="shrink-0"><rect x="0.5" y="0.5" width="11" height="11" fill="#fff" stroke="#b8b4a0" /><path d="M1 11L11 1" stroke="#e84858" strokeWidth="1.5" /></svg>
            <Anchor size={13} color="#d8d8d0" className="shrink-0" />
            <div className="shrink-0"><EyeIcon width={24} /></div>
          </div>
        </div>
      </div>
    </div>
  );
}

function Canvas() {
  return (
    <div className="flex h-[412px] w-[684px] shrink-0 flex-col bg-white">
      <div className="h-[329px] border-b border-[#e6e6ea]" />
      <div className="ml-[6px] h-[83px] w-[678px] overflow-hidden bg-[#f0f0f0]">
        <div className="w-[848px] origin-top-left scale-[0.8] blur-[0.4px]">
          <ToolPanel />
        </div>
      </div>
    </div>
  );
}

function LayerPanel() {
  return (
    <div className="relative flex h-[640px] w-[250px] shrink-0 flex-col border-l border-[#c0c0d4] bg-[#f0f0f0]">
      <SideTabs tabH="h-[35px]" widths={["w-[84px]", "w-[85px]"]} sizes={[28, 28, 28]} />
      <div className="mt-[8px] h-[25px] pl-[20px]">
        <div className="flex h-full w-[212px] overflow-hidden rounded-full border border-[#bcbcd2] bg-linear-to-b from-[#f4f4f4] to-[#dcdce0]">
          <div className="flex flex-1 items-center justify-center"><AddLayerIcon width={30} /></div>
          <div className="flex flex-1 items-center justify-center border-l border-[#c2c2d4]"><Anchor size={19} color="#d83a34" strokeWidth={2.4} /></div>
          <div className="flex flex-1 items-center justify-center border-l border-[#c2c2d4]"><Anchor size={19} color="#cfcfcf" strokeWidth={2} /></div>
          <div className="flex flex-1 items-center justify-center border-l border-[#c2c2d4]"><EyeIcon width={32} /></div>
          <div className="flex flex-1 items-center justify-center border-l border-[#c2c2d4]"><EyeIcon gray width={32} /></div>
        </div>
      </div>
      <div className="mt-[8px] ml-[4px] flex flex-1 border-t border-l border-[#c0c0d4]">
        <div className="flex w-[229px] flex-col bg-white">
          <div className="relative flex h-[48px] flex-col border-b border-[#c0c0d4] bg-[#fdfeea]">
            <div className="flex h-[22px]">
              <svg width="58" height="22" viewBox="0 0 58 22" className="shrink-0">
                <path d="M48 0L57 22H58V0Z" fill="#f5f8e6" />
                <path d="M48 0L57 21.5H58" stroke="#c0c0d4" fill="none" />
              </svg>
              <div className="flex flex-1 items-center border-b border-[#c0c0d4] bg-[#f5f8e6] pl-[5px] font-['Noto_Sans',sans-serif] text-[12px] text-[#222]">01. L01</div>
            </div>
            <div className="flex flex-1 items-center justify-end gap-[18px] pr-[4px]">
              <Anchor size={17} color="#d0d0c8" strokeWidth={2} />
              <EyeIcon width={32} />
            </div>
            <div className="absolute top-[15px] left-[10px] flex h-[17px] w-[27px] items-center justify-center bg-[#9fec8e]">
              <svg width="20" height="11" viewBox="0 0 20 11">
                <path d="M2 3H7M2 6H8M3 9H9M10 5L14 9" stroke="#334" strokeWidth="1.4" />
                <circle cx="13" cy="3" r="2" fill="#c060c0" />
                <circle cx="16" cy="7" r="2" fill="#506050" />
              </svg>
            </div>
          </div>
        </div>
        <div className="flex flex-1 flex-col items-center justify-between py-[3px]">
          <ChevronUp size={14} color="#c8c8c8" strokeWidth={2.4} />
          <ChevronDown size={14} color="#c8c8c8" strokeWidth={2.4} />
        </div>
      </div>
      <div className="absolute right-[14px] bottom-[6px] left-[16px] flex items-center gap-[13px] text-[#8c8c8c]">
        <svg width="60" height="60" viewBox="0 0 60 60" className="shrink-0">
          <circle cx="30" cy="30" r="30" fill="#8c8c8c" />
          <path d="M9 21C14 14 35 8 46 12C50 14 50 24 44 26C40 28 38 28 36 29C35 36 34 42 31 46C28 48 23 47 23 44C26 38 27 33 26 29C20 27 13 26 9 21Z" fill="#fff" />
          <path d="M18 18C24 15 30 13 36 13C32 16 25 18 18 18Z" fill="#bdbdbd" />
        </svg>
        <div className="flex flex-col items-center">
          <span className="font-['Noto_Sans_CJK_SC',sans-serif] text-[36px] leading-[38px] font-bold whitespace-nowrap italic">黑区网络</span>
          <span className="font-['Liberation_Sans',sans-serif] text-[14px] leading-[18px] tracking-[3px] whitespace-nowrap italic">www.heiqu.com</span>
        </div>
      </div>
    </div>
  );
}

function TitleBar() {
  return (
    <div className="flex h-[28px] shrink-0 items-center justify-between border-b border-[#c4c4d4] bg-white pr-[15px] pl-[8px]">
      <div className="flex items-center gap-[5px]">
        <svg width="15" height="15" viewBox="0 0 15 15">
          <path d="M1 4L7 1L14 4V11L8 14L1 11Z" fill="#a8705c" />
          <path d="M1 4L8 7V14M8 7L14 4" stroke="#fff" />
          <rect x="9" y="7" width="2" height="2" fill="#d04040" />
          <rect x="11" y="9" width="2" height="2" fill="#40a060" />
        </svg>
        <span className="font-['Noto_Sans','Noto_Sans_CJK_SC',sans-serif] text-[12.6px] text-[#999]">AxGlyph - 无标题 - * Unregistered - 160%</span>
      </div>
      <div className="flex items-center gap-[35.5px]">
        <div className="h-px w-[10px] bg-[#8a8a8a]" />
        <div className="h-[10px] w-[10px] border border-[#8a8a8a]" />
        <svg width="10" height="10" viewBox="0 0 10 10"><path d="M0 0L10 10M10 0L0 10" stroke="#8a8a8a" /></svg>
      </div>
    </div>
  );
}

export default function App() {
  return (
    <div className="flex h-[668px] w-[1097px] flex-col overflow-hidden bg-white font-['Liberation_Sans',sans-serif]">
      <TitleBar />
      <div className="flex">
        <div className="flex w-[847px] shrink-0 flex-col overflow-hidden">
          <div className="relative flex h-[412px]">
            <Canvas />
            <BackLayers />
            <Chart />
          </div>
          <div className="relative z-20 h-[228px]">
            <ToolPanel />
          </div>
        </div>
        <LayerPanel />
      </div>
    </div>
  );
}
